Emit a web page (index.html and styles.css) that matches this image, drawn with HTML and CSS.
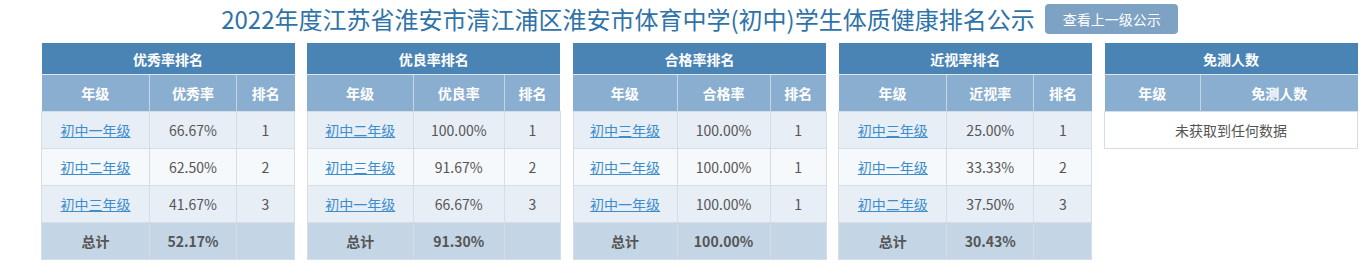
FILE: index.html
```html
<!DOCTYPE html>
<html lang="zh-CN">
<head>
<meta charset="utf-8">
<title>体质健康排名公示</title>
<link rel="stylesheet" href="styles.css">
</head>
<body>
<div class="page">
  <div class="heading">
    <h1 class="title">2022年度江苏省淮安市清江浦区淮安市体育中学(初中)学生体质健康排名公示</h1>
    <a class="btn" href="#">查看上一级公示</a>
  </div>
  <div class="boards">
    <table class="rank t1">
      <colgroup><col class="c1"><col class="c2"><col class="c3"></colgroup>
      <thead>
        <tr class="cap"><th colspan="3">优秀率排名</th></tr>
        <tr class="hd"><th>年级</th><th>优秀率</th><th>排名</th></tr>
      </thead>
      <tbody>
        <tr class="odd"><td><a href="#">初中一年级</a></td><td>66.67%</td><td>1</td></tr>
        <tr class="even"><td><a href="#">初中二年级</a></td><td>62.50%</td><td>2</td></tr>
        <tr class="odd"><td><a href="#">初中三年级</a></td><td>41.67%</td><td>3</td></tr>
        <tr class="total"><td>总计</td><td>52.17%</td><td></td></tr>
      </tbody>
    </table>
    <table class="rank t2">
      <colgroup><col class="c1"><col class="c2"><col class="c3"></colgroup>
      <thead>
        <tr class="cap"><th colspan="3">优良率排名</th></tr>
        <tr class="hd"><th>年级</th><th>优良率</th><th>排名</th></tr>
      </thead>
      <tbody>
        <tr class="odd"><td><a href="#">初中二年级</a></td><td>100.00%</td><td>1</td></tr>
        <tr class="even"><td><a href="#">初中三年级</a></td><td>91.67%</td><td>2</td></tr>
        <tr class="odd"><td><a href="#">初中一年级</a></td><td>66.67%</td><td>3</td></tr>
        <tr class="total"><td>总计</td><td>91.30%</td><td></td></tr>
      </tbody>
    </table>
    <table class="rank t3">
      <colgroup><col class="c1"><col class="c2"><col class="c3"></colgroup>
      <thead>
        <tr class="cap"><th colspan="3">合格率排名</th></tr>
        <tr class="hd"><th>年级</th><th>合格率</th><th>排名</th></tr>
      </thead>
      <tbody>
        <tr class="odd"><td><a href="#">初中三年级</a></td><td>100.00%</td><td>1</td></tr>
        <tr class="even"><td><a href="#">初中二年级</a></td><td>100.00%</td><td>1</td></tr>
        <tr class="odd"><td><a href="#">初中一年级</a></td><td>100.00%</td><td>1</td></tr>
        <tr class="total"><td>总计</td><td>100.00%</td><td></td></tr>
      </tbody>
    </table>
    <table class="rank t4">
      <colgroup><col class="c1"><col class="c2"><col class="c3"></colgroup>
      <thead>
        <tr class="cap"><th colspan="3">近视率排名</th></tr>
        <tr class="hd"><th>年级</th><th>近视率</th><th>排名</th></tr>
      </thead>
      <tbody>
        <tr class="odd"><td><a href="#">初中三年级</a></td><td>25.00%</td><td>1</td></tr>
        <tr class="even"><td><a href="#">初中一年级</a></td><td>33.33%</td><td>2</td></tr>
        <tr class="odd"><td><a href="#">初中二年级</a></td><td>37.50%</td><td>3</td></tr>
        <tr class="total"><td>总计</td><td>30.43%</td><td></td></tr>
      </tbody>
    </table>
    <table class="rank t5">
      <colgroup><col class="c1"><col class="c2"></colgroup>
      <thead>
        <tr class="cap"><th colspan="2">免测人数</th></tr>
        <tr class="hd"><th>年级</th><th>免测人数</th></tr>
      </thead>
      <tbody>
        <tr class="empty"><td colspan="2">未获取到任何数据</td></tr>
      </tbody>
    </table>
  </div>
</div>
</body>
</html>
```
FILE: styles.css
```css
html, body {
  margin: 0;
  padding: 0;
  background: #ffffff;
}
body {
  font-family: "Noto Sans CJK SC", "Noto Sans", sans-serif;
  font-size: 14px;
  color: #444;
}
.page {
  width: 1368px;
}
.heading {
  display: flex;
  justify-content: center;
  align-items: center;
  height: 37px;
  padding: 0 0 6px 31px;
  box-sizing: content-box;
}
.title {
  margin: 0;
  font-size: 24px;
  font-weight: normal;
  color: #2f73a8;
  line-height: 34px;
  letter-spacing: 0;
}
.btn {
  display: inline-block;
  margin-left: 10px;
  height: 30px;
  line-height: 30px;
  padding: 0 17px 0 18px;
  background: #7da2c3;
  color: #ffffff;
  border-radius: 4px;
  font-size: 14px;
  text-decoration: none;
}
.boards {
  display: flex;
  align-items: flex-start;
  gap: 11.75px;
  padding-left: 41px;
}
.rank {
  width: 253px;
  border-collapse: collapse;
  table-layout: fixed;
  flex: none;
}
.rank th, .rank td {
  padding: 0;
  text-align: center;
  vertical-align: middle;
  font-size: 14px;
}
.cap th {
  height: 31px;
  background: #4a84b5;
  color: #ffffff;
  font-weight: bold;
  border-bottom: 1px solid #dfe8f1;
}
.hd th {
  height: 36px;
  background: #8aaecf;
  color: #ffffff;
  font-weight: bold;
  border-left: 1px solid #c2d5e6;
}
.hd th:first-child {
  border-left: none;
}
.rank tbody td {
  height: 36px;
  border: 1px solid #d6dde5;
  color: #555;
}
.odd td { background: #e8eef6; }
.even td { background: #f6f9fc; }
.total td {
  background: #c4d6e5;
  font-weight: bold;
  color: #333;
}
.rank a {
  color: #3c8dcb;
  text-decoration: underline;
}
.empty td {
  background: #ffffff;
  color: #444;
}
.t1 .c1 { width: 108px; }
.t1 .c2 { width: 87px; }
.t1 .c3 { width: 58px; }
.t2 .c1 { width: 106px; }
.t2 .c2 { width: 91px; }
.t2 .c3 { width: 56px; }
.t3 .c1 { width: 104px; }
.t3 .c2 { width: 93px; }
.t3 .c3 { width: 56px; }
.t4 .c1 { width: 108px; }
.t4 .c2 { width: 87px; }
.t4 .c3 { width: 58px; }
.t5 .c1 { width: 96px; }
.t5 .c2 { width: 157px; }
```
